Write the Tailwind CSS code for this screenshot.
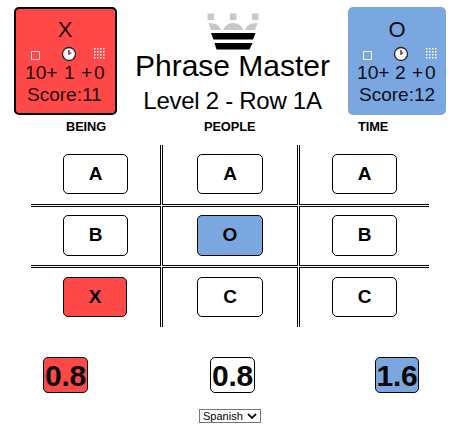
<!DOCTYPE html>
<html lang="en">
<head>
<meta charset="utf-8">
<title>Phrase Master</title>
<script src="https://cdn.jsdelivr.net/npm/@tailwindcss/browser@4"></script>
</head>
<body class="bg-white text-black font-['Liberation_Sans',Arial,sans-serif] w-[457px] h-[439px] overflow-hidden">
<svg class="hidden">
  <symbol id="clock" viewBox="0 0 16 16">
    <circle cx="8" cy="8" r="6.5" fill="#fff" stroke="#222" stroke-width="1.3"/>
    <circle cx="8" cy="8" r="5.1" fill="none" stroke="#bbb" stroke-width=".7" stroke-dasharray="1 1.67"/>
    <path d="M8 4v4" stroke="#222" stroke-width="1.3"/><path d="M8 7.8l2.4-1" stroke="#222" stroke-width="1"/>
    <circle cx="8" cy="8" r="1" fill="#d33"/>
  </symbol>
  <symbol id="dots" viewBox="0 0 11 11">
    <path d="M0 .75h11M0 3.75h11M0 6.75h11M0 9.75h11" stroke="#fff" stroke-width="1.5" stroke-dasharray="1.5 1.5"/>
  </symbol>
</svg>
<header class="flex h-[115px] pt-[7px] pl-[14px]">
  <section class="w-[103px] h-[108px] bg-[#ff4848] border-2 border-black rounded-[5px] text-[#1c0808]">
    <div class="text-center text-[22px] leading-[24px] pt-[9px] pr-px">X</div>
    <div class="flex h-[17px] pl-[15px] pt-[4px]">
      <svg class="w-[9px] h-[9px] mt-[5px] shrink-0" viewBox="0 0 9 9"><path d="M.5.5h8v8h-8z" fill="none" stroke="#ffdada"/></svg>
      <svg class="w-4 h-4 ml-[21px] mr-[17px] shrink-0"><use href="#clock"/></svg>
      <svg class="w-[11px] h-[11px] mt-[2px] shrink-0"><use href="#dots"/></svg>
    </div>
    <div class="flex text-[19.2px] leading-[22px] pl-[9px] mt-[3px] whitespace-nowrap"><span class="w-[39px]">10+</span><span class="w-[17px]">1</span><span class="w-[13px]">+</span><span>0</span></div>
    <div class="text-[19px] leading-[22px] pl-[11px]">Score:11</div>
  </section>
  <div class="w-[231px] flex flex-col items-center">
    <svg class="w-[52px] h-[38px] mt-[5px] shrink-0" viewBox="0 0 52 38">
      <path fill="#c8c8c8" d="M.5 1.5h6.5v6.5h-6.5zM23 1.5h6.5v6.5h-6.5zM45 1.5h6.5v6.5h-6.5zM1.5 11C8 11 12 13 13.5 17v1H4zM16.5 18v-1c2-4 6-6 9.7-6s7.800 2 9.800 6v1zM50.500 11C44 11 40 13 38.500 17v1h9.500z"/>
      <path d="M4 21h44.500l-2.500 6.500H6.500zM7.500 31h38L42.500 37.500h-33z"/>
    </svg>
    <h1 class="text-[30px] leading-[34px] mt-[-1px] whitespace-nowrap">Phrase Master</h1>
    <h2 class="text-[24px] leading-[28px] mt-[4px] tracking-[-0.28px] whitespace-nowrap">Level 2 - Row 1A</h2>
  </div>
  <section class="w-[98px] h-[108px] bg-[#7ba7e0] rounded-[5px] text-[#0b0f1c]">
    <div class="text-center text-[22px] leading-[24px] pt-[11px]">O</div>
    <div class="flex h-[17px] pl-[15px] pt-[4px]">
      <svg class="w-[9px] h-[9px] mt-[5px] shrink-0" viewBox="0 0 9 9"><path d="M.5.5h8v8h-8z" fill="none" stroke="#f4f8ff"/></svg>
      <svg class="w-4 h-4 ml-[21px] mr-[17px] shrink-0"><use href="#clock"/></svg>
      <svg class="w-[11px] h-[11px] mt-[2px] shrink-0"><use href="#dots"/></svg>
    </div>
    <div class="flex text-[19.2px] leading-[22px] pl-[9px] mt-[3px] whitespace-nowrap"><span class="w-[38px]">10+</span><span class="w-[17px]">2</span><span class="w-[13px]">+</span><span>0</span></div>
    <div class="text-[19px] leading-[22px] pl-[11px]">Score:12</div>
  </section>
</header>
<div class="flex h-[30px] pt-[3px] pl-[66px] text-[12.8px] leading-[18px] font-bold tracking-[-0.1px]"><span class="w-[138px]">BEING</span><span class="w-[154px]">PEOPLE</span><span>TIME</span></div>
<main class="ml-[31px] grid grid-cols-[130px_136px_130px] grid-rows-[60px_60px_60px] gap-px w-[398px] text-[19px] font-bold">
  <div class="border-r border-b border-black pl-[32px] pt-[9px]"><button class="block w-[65px] h-[40px] border border-black rounded-[5px]">A</button></div>
  <div class="border-x border-b border-black pl-[34px] pt-[9px]"><button class="block w-[66px] h-[40px] border border-black rounded-[5px]">A</button></div>
  <div class="border-l border-b border-black pl-[32px] pt-[9px]"><button class="block w-[65px] h-[40px] border border-black rounded-[5px]">A</button></div>
  <div class="border-r border-y border-black pl-[32px] pt-[8px]"><button class="block w-[65px] h-[41px] border border-black rounded-[5px]">B</button></div>
  <div class="border border-black pl-[34px] pt-[8px]"><button class="block w-[66px] h-[41px] border border-black rounded-[5px] bg-[#7ba7e0]">O</button></div>
  <div class="border-l border-y border-black pl-[32px] pt-[8px]"><button class="block w-[65px] h-[41px] border border-black rounded-[5px]">B</button></div>
  <div class="border-r border-t border-black pl-[32px] pt-[9px]"><button class="block w-[64px] h-[40px] border border-black rounded-[5px] bg-[#ff4848]">X</button></div>
  <div class="border-x border-t border-black pl-[34px] pt-[9px]"><button class="block w-[66px] h-[40px] border border-black rounded-[5px]">C</button></div>
  <div class="border-l border-t border-black pl-[32px] pt-[9px]"><button class="block w-[65px] h-[40px] border border-black rounded-[5px]">C</button></div>
</main>
<div class="flex pt-[30px] pl-[43px] text-[30px] leading-[35px] font-bold text-[#080808] tracking-[-0.3px]">
  <div class="w-[45px] h-[36px] mr-[122px] border border-black rounded-[5px] bg-[#ff4848] flex justify-center">0.8</div>
  <div class="w-[45px] h-[36px] mr-[120px] border border-black rounded-[5px] flex justify-center">0.8</div>
  <div class="w-[44px] h-[36px] border border-black rounded-[5px] bg-[#7ba7e0] flex justify-center">1.6</div>
</div>
<div class="mt-[16px] ml-[199px] w-[62px] h-[14px] border border-[#767676] flex items-center pl-[3px] text-[11px] leading-[12px]">
  <span class="w-[44px]">Spanish</span>
  <svg class="w-[10px] h-[6px]" viewBox="0 0 10 6"><path d="M1 1l4 4 4-4" fill="none" stroke="#111" stroke-width="1.8"/></svg>
</div>
</body>
</html>
